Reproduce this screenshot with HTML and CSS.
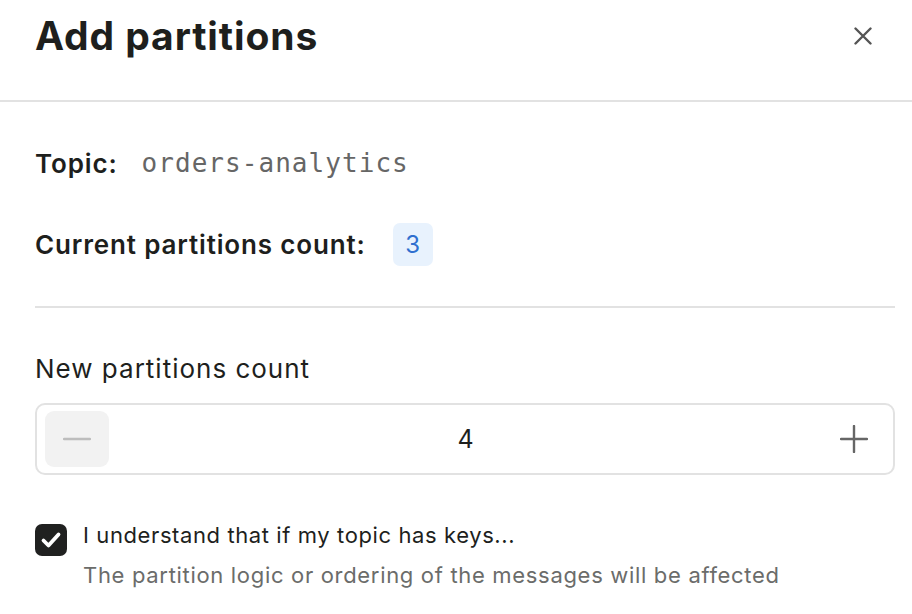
FILE: index.html
```html
<!DOCTYPE html>
<html>
<head>
<meta charset="utf-8">
<link rel="stylesheet" href="styles.css">
</head>
<body>
<div class="modal">
  <header class="modal-header">
    <h1 class="title">Add partitions</h1>
    <button class="close" aria-label="Close">
      <svg width="18" height="18" viewBox="0 0 18 18"><path d="M1.5 1.5L16.5 16.5M16.5 1.5L1.5 16.5" stroke="#555" stroke-width="2.4" stroke-linecap="round"/></svg>
    </button>
  </header>
  <section class="modal-body">
    <div class="info-row topic-row">
      <span class="label">Topic:</span>
      <span class="mono">orders-analytics</span>
    </div>
    <div class="info-row count-row">
      <span class="label">Current partitions count:</span>
      <span class="badge">3</span>
    </div>
    <hr class="divider">
    <div class="field-label">New partitions count</div>
    <div class="stepper">
      <button class="step-btn minus" aria-label="Decrease">
        <svg width="28" height="4" viewBox="0 0 28 4"><path d="M1 2H27" stroke="#bdbdbd" stroke-width="2.4" stroke-linecap="round"/></svg>
      </button>
      <div class="value">4</div>
      <button class="step-btn plus" aria-label="Increase">
        <svg width="28" height="28" viewBox="0 0 28 28"><path d="M1 14H27M14 1V27" stroke="#666" stroke-width="2.4" stroke-linecap="round"/></svg>
      </button>
    </div>
    <div class="check-row">
      <span class="checkbox">
        <svg width="22" height="18" viewBox="0 0 22 18"><path d="M3.5 9.5L8.5 14.5L18.5 3.5" fill="none" stroke="#fff" stroke-width="3.8" stroke-linecap="round" stroke-linejoin="round"/></svg>
      </span>
      <div class="check-text">
        <div class="check-title">I understand that if my topic has keys...</div>
        <div class="check-desc">The partition logic or ordering of the messages will be affected</div>
      </div>
    </div>
  </section>
</div>
</body>
</html>
```

FILE: styles.css
```css
* { box-sizing: border-box; }
html, body {
  margin: 0;
  padding: 0;
  background: #fff;
}
body {
  font-family: Inter, "Noto Sans", sans-serif;
  color: #1e1f1d;
}
.modal {
  width: 912px;
  height: 614px;
  overflow: hidden;
}
.modal-header {
  height: 102px;
  padding: 0 40px 0 35px;
  border-bottom: 2px solid #e2e2e2;
  display: flex;
  align-items: flex-start;
  justify-content: space-between;
}
.title {
  margin: 0;
  margin-top: 13px;
  font-size: 39px;
  line-height: 46px;
  font-weight: 700;
  letter-spacing: 0.9px;
}
.close {
  border: 0;
  background: none;
  padding: 0;
  margin-top: 27px;
  width: 18px;
  height: 18px;
  display: flex;
}
.modal-body {
  padding: 0 17px 0 35px;
}
.info-row {
  display: flex;
  align-items: center;
}
.label {
  font-size: 26px;
  font-weight: 600;
  letter-spacing: 0.85px;
}
.topic-row {
  margin-top: 43px;
  height: 36px;
}
.mono {
  margin-left: 24px;
  font-family: "DejaVu Sans Mono", monospace;
  font-size: 26px;
  letter-spacing: 1.05px;
  color: #666;
}
.count-row {
  margin-top: 41px;
  height: 44px;
}
.badge {
  margin-left: 27px;
  width: 40px;
  height: 43px;
  border-radius: 7px;
  background: #e8f2fd;
  color: #2f6fcf;
  font-size: 24px;
  display: flex;
  align-items: center;
  justify-content: center;
}
.divider {
  margin: 40px 0 0;
  border: 0;
  border-top: 2px solid #e2e2e2;
}
.field-label {
  margin-top: 44px;
  font-size: 26px;
  line-height: 34px;
  letter-spacing: 1px;
}
.stepper {
  margin-top: 17px;
  height: 72px;
  border: 2px solid #e2e2e2;
  border-radius: 10px;
  display: flex;
  align-items: center;
  padding: 0 7px 0 8px;
}
.step-btn {
  border: 0;
  padding: 0;
  width: 64px;
  height: 56px;
  border-radius: 9px;
  background: transparent;
  display: flex;
  align-items: center;
  justify-content: center;
}
.step-btn.minus { background: #f2f2f2; }
.value {
  flex: 1;
  text-align: center;
  font-size: 25px;
}
.check-row {
  margin-top: 49px;
  display: flex;
  gap: 16px;
}
.checkbox {
  flex: none;
  width: 32px;
  height: 32px;
  border-radius: 7px;
  background: #202120;
  display: flex;
  align-items: center;
  justify-content: center;
}
.check-text {
  display: flex;
  flex-direction: column;
}
.check-title {
  font-size: 22px;
  line-height: 26px;
  margin-top: -2px;
  letter-spacing: 0.6px;
}
.check-desc {
  margin-top: 14px;
  font-size: 22px;
  line-height: 26px;
  letter-spacing: 0.68px;
  color: #6b6c6a;
}
```
